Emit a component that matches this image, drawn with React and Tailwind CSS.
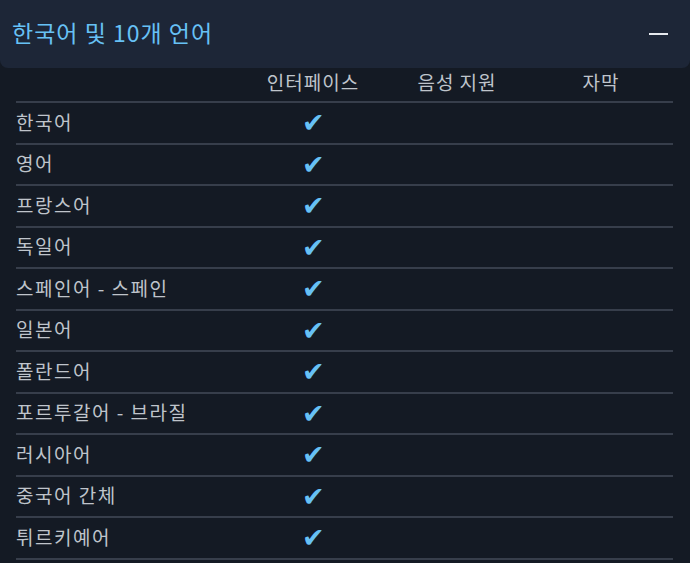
const languages = [
  '한국어',
  '영어',
  '프랑스어',
  '독일어',
  '스페인어 - 스페인',
  '일본어',
  '폴란드어',
  '포르투갈어 - 브라질',
  '러시아어',
  '중국어 간체',
  '튀르키예어',
];

const App = () => {
  return (
    <div
      className="min-h-[563px] w-[690px] bg-[#141a24] text-[#bfc4cb]"
      style={{ fontFamily: '"Noto Sans CJK KR", "Noto Sans", sans-serif' }}
    >
      <div className="flex h-[68px] items-center justify-between rounded-b-lg bg-[#1d2637] pl-3 pr-[22px]">
        <h2 className="pb-1 text-[23px] font-normal tracking-[1px] text-[#67c1f5]">한국어 및 10개 언어</h2>
        <div className="h-[2px] w-[19px] bg-[#e6e9ee]" />
      </div>
      <div className="ml-4 w-[657px]">
        <div className="grid h-[35px] grid-cols-[225px_144px_144px_144px] items-center border-b-2 border-[#373e4b] text-[19px] tracking-[1px]">
          <div />
          <div className="pb-1 text-center">인터페이스</div>
          <div className="pb-1 text-center">음성 지원</div>
          <div className="pb-1 text-center">자막</div>
        </div>
        {languages.map((lang) => (
          <div
            key={lang}
            className="grid h-[41.5px] grid-cols-[225px_144px_144px_144px] items-center border-b-2 border-[#373e4b] text-[19px] tracking-[1.5px]"
          >
            <div className="pb-0.5">{lang}</div>
            <div
              className="pl-0.5 text-center text-[27px] leading-none text-[#67c1f5]"
              style={{ fontFamily: '"DejaVu Sans", sans-serif' }}
            >
              ✔
            </div>
            <div />
            <div />
          </div>
        ))}
      </div>
    </div>
  );
};

export default App;
